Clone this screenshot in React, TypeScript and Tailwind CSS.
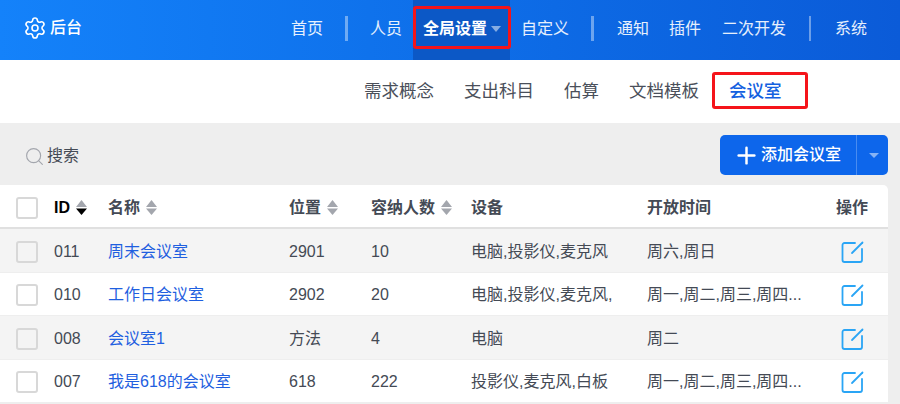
import { Plus, Search, Settings } from 'lucide-react';

const rooms = [
  { id: '011', name: '周末会议室', place: '2901', size: '10', gear: '电脑,投影仪,麦克风', open: '周六,周日' },
  { id: '010', name: '工作日会议室', place: '2902', size: '20', gear: '电脑,投影仪,麦克风,', open: '周一,周二,周三,周四...' },
  { id: '008', name: '会议室1', place: '方法', size: '4', gear: '电脑', open: '周二' },
  { id: '007', name: '我是618的会议室', place: '618', size: '222', gear: '投影仪,麦克风,白板', open: '周一,周二,周三,周四...' },
];

const grid = 'grid grid-cols-[54px_54px_181px_82px_100px_176px_189px_52px] items-center';

function Sort({ active = false }: { active?: boolean }) {
  return (
    <svg width="11" height="15" viewBox="0 0 11 15" className="ml-[6px]">
      <path d="M5.5 0L11 7H0Z" fill="#a3a6ad" />
      <path d="M0 8.5H11L5.5 15Z" fill={active ? '#000000' : '#a3a6ad'} />
    </svg>
  );
}

function Check() {
  return <span className="block h-[22px] w-[22px] rounded-[3px] border-2 border-[#d8d8d8] bg-transparent" />;
}

function EditIcon() {
  return (
    <svg width="24" height="24" viewBox="0 0 24 24" fill="none" stroke="#2aa5f5" strokeWidth="1.8" strokeLinecap="round" strokeLinejoin="round">
      <path d="M15 3H4.5A2 2 0 0 0 2.5 5V20A2 2 0 0 0 4.5 22H20A2 2 0 0 0 22 20V9" />
      <path d="M12 13L22.5 2.5" />
    </svg>
  );
}

export default function App() {
  return (
    <div className="relative h-[404px] w-[900px] overflow-hidden bg-[#eeeeee] font-['Liberation_Sans','Noto_Sans_CJK_SC',sans-serif] text-[16px] text-[#444a55]">
      {/* Top bar */}
      <header className="flex h-[60px] items-center bg-gradient-to-r from-[#1482fa] to-[#0b5bd8] pl-[23px] pr-[33px] text-white/90">
        <div className="flex items-center pb-[5px] font-medium text-white">
          <Settings size={24} strokeWidth={1.6} />
          <span className="ml-[3px]">后台</span>
        </div>
        <nav className="ml-auto flex items-center">
          <span className="pb-[3px]">首页</span>
          <span className="mx-[22px] mb-[3px] h-[25px] w-[3px] bg-white/40" />
          <span className="pb-[3px]">人员</span>
          <span className="relative ml-[11px] flex h-[60px] w-[97px] items-center bg-[#0c58c6] pb-[3px] pl-[10px] font-bold text-white">
            全局设置
            <span className="ml-[4px] h-0 w-0 border-x-[5px] border-t-[6px] border-x-transparent border-t-white/50" />
            <span className="absolute left-0 top-[6px] h-[43px] w-[98px] rounded-[3px] border-[3px] border-[#f5141a]" />
          </span>
          <span className="ml-[11px] pb-[3px]">自定义</span>
          <span className="ml-[22px] mr-[23px] mb-[3px] h-[25px] w-[3px] bg-white/40" />
          <span className="pb-[3px]">通知</span>
          <span className="ml-[20px] pb-[3px]">插件</span>
          <span className="ml-[21px] pb-[3px]">二次开发</span>
          <span className="ml-[23px] mr-[24px] mb-[3px] h-[25px] w-[2px] bg-white/40" />
          <span className="pb-[3px]">系统</span>
        </nav>
      </header>

      {/* Sub nav */}
      <div className="flex h-[63px] items-center gap-[30px] bg-white pl-[364px] text-[17.5px] text-[#4a4f5a]">
        <span>需求概念</span>
        <span>支出科目</span>
        <span>估算</span>
        <span>文档模板</span>
        <span className="relative font-medium text-[#1360e0]">
          会议室
          <span className="absolute -left-[17px] -top-[6px] h-[37px] w-[96px] rounded-[3px] border-[3px] border-[#f5141a]" />
        </span>
      </div>

      {/* Toolbar */}
      <div className="flex h-[62px] items-center justify-between pl-[24px] pr-[12px]">
        <div className="mt-[4px] flex items-center gap-[2px]">
          <Search size={21} strokeWidth={1.3} className="text-[#a3a6ad]" />
          <span>搜索</span>
        </div>
        <div className="mt-[2px] flex h-[40px] w-[168px] items-center rounded-[5px] bg-[#0d66eb] text-white">
          <div className="flex h-full w-[137px] items-center gap-[1px] border-r border-white/25 pl-[13px] font-medium">
            <Plus size={27} strokeWidth={2.2} />
            <span>添加会议室</span>
          </div>
          <span className="ml-[12px] h-0 w-0 border-x-[5px] border-t-[5px] border-x-transparent border-t-white/50" />
        </div>
      </div>

      {/* Table */}
      <div className="w-[888px] rounded-tr-[5px] bg-white">
        <div className={`${grid} h-[44px] border-b-2 border-[#e0e0e0] pt-[3px] font-bold`}>
          <span className="pl-[16px]"><Check /></span>
          <span className="flex items-center text-black">ID<Sort active /></span>
          <span className="flex items-center">名称<Sort /></span>
          <span className="flex items-center">位置<Sort /></span>
          <span className="flex items-center">容纳人数<Sort /></span>
          <span>设备</span>
          <span>开放时间</span>
          <span>操作</span>
        </div>
        {rooms.map((room, i) => (
          <div key={room.id} className={`${grid} h-[43.5px] border-b border-[#eeeeee] pt-[3px] ${i % 2 === 0 ? 'bg-[#f4f4f4]' : 'bg-white'}`}>
            <span className="pl-[16px]"><Check /></span>
            <span>{room.id}</span>
            <span className="text-[#1f5fe0]">{room.name}</span>
            <span>{room.place}</span>
            <span>{room.size}</span>
            <span>{room.gear}</span>
            <span>{room.open}</span>
            <span className="pl-[4px]"><EditIcon /></span>
          </div>
        ))}
      </div>
    </div>
  );
}
